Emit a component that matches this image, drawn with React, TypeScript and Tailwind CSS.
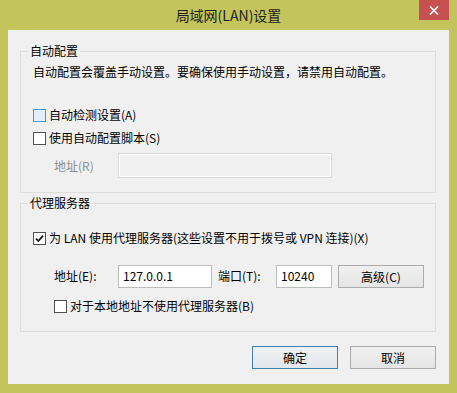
const FONT = "font-['Microsoft_YaHei','Noto_Sans_CJK_SC',sans-serif]";

function Checkbox({ checked, focused }: { checked?: boolean; focused?: boolean }) {
  return (
    <span
      className={
        "flex h-[13px] w-[13px] shrink-0 items-center justify-center border " +
        (focused ? "border-[#4a9ad8] bg-[#e2eff9]" : "border-[#505050] bg-white")
      }
    >
      {checked && (
        <svg width="9" height="9" viewBox="0 0 9 9">
          <path d="M1 4.6 L3.4 7 L8 1.6" fill="none" stroke="#1a1a1a" strokeWidth="1.8" />
        </svg>
      )}
    </span>
  );
}

export default function App() {
  return (
    <div className={"flex h-[393px] w-[457px] flex-col bg-[#c3c55c] text-[12px] text-black " + FONT}>
      {/* Title bar */}
      <div className="relative flex h-[30px] shrink-0 items-center justify-center">
        <span className="text-[14px] leading-none text-[#1e1e1e]">局域网(LAN)设置</span>
        <button className="absolute right-[8px] top-0 flex h-[20px] w-[30px] items-center justify-center bg-[#c75050]">
          <svg width="10" height="9" viewBox="0 0 10 9">
            <path d="M1 0.5 L9 8.5 M9 0.5 L1 8.5" stroke="white" strokeWidth="1.6" />
          </svg>
        </button>
      </div>

      {/* Client area */}
      <div className="mx-[8px] flex h-[354px] flex-col bg-[#f0f0f0] pt-[13px]">
        {/* 自动配置 */}
        <fieldset className="ml-[12px] h-[150px] w-[416px] border border-[#dcdcdc] pl-[12px]">
          <legend className="ml-[-5px] px-[2px] leading-[16px]">自动配置</legend>
          <p className="mt-[5px] leading-[16px]">
            自动配置会覆盖手动设置。要确保使用手动设置，请禁用自动配置。
          </p>
          <label className="mt-[27px] flex h-[16px] items-center gap-[3px]">
            <Checkbox focused />
            <span>自动检测设置(A)</span>
          </label>
          <label className="mt-[7px] flex h-[16px] items-center gap-[3px]">
            <Checkbox />
            <span>使用自动配置脚本(S)</span>
          </label>
          <div className="mt-[7px] flex items-center pl-[21px]">
            <span className="w-[64px] text-[#8d8d8d]">地址(R)</span>
            <div className="h-[25px] w-[214px] border border-[#d9d9d9] shadow-[inset_0_0_0_1px_#ffffff]" />
          </div>
        </fieldset>

        {/* 代理服务器 */}
        <fieldset className="ml-[12px] mt-[2px] h-[137px] w-[416px] border border-[#dcdcdc] pl-[12px]">
          <legend className="ml-[-5px] px-[2px] leading-[16px]">代理服务器</legend>
          <label className="mt-[19px] flex h-[16px] items-center gap-[3px]">
            <Checkbox checked />
            <span>为 LAN 使用代理服务器(这些设置不用于拨号或 VPN 连接)(X)</span>
          </label>
          <div className="mt-[18px] flex items-center pl-[21px]">
            <span className="w-[64px]">地址(E):</span>
            <div className="flex h-[23px] w-[94px] items-center border border-[#bdbdbd] bg-white pl-[4px]">
              127.0.0.1
            </div>
            <span className="ml-[6px] w-[58px]">端口(T):</span>
            <div className="flex h-[23px] w-[56px] items-center border border-[#bdbdbd] bg-white pl-[4px]">
              10240
            </div>
            <button className="ml-[6px] mt-[1px] h-[23px] w-[86px] border border-[#acacac] bg-gradient-to-b from-[#f0f0f0] to-[#e5e5e5]">
              高级(C)
            </button>
          </div>
          <label className="mt-[10px] flex h-[16px] items-center gap-[3px] pl-[21px]">
            <Checkbox />
            <span>对于本地地址不使用代理服务器(B)</span>
          </label>
        </fieldset>

        {/* Buttons */}
        <div className="ml-[244px] mt-[14px] flex gap-[12px]">
          <button className="h-[23px] w-[86px] border border-[#3c7fb1] bg-gradient-to-b from-[#eef1f4] to-[#e3e6ea]">
            确定
          </button>
          <button className="h-[23px] w-[86px] border border-[#acacac] bg-gradient-to-b from-[#f0f0f0] to-[#e5e5e5]">
            取消
          </button>
        </div>
      </div>
    </div>
  );
}
